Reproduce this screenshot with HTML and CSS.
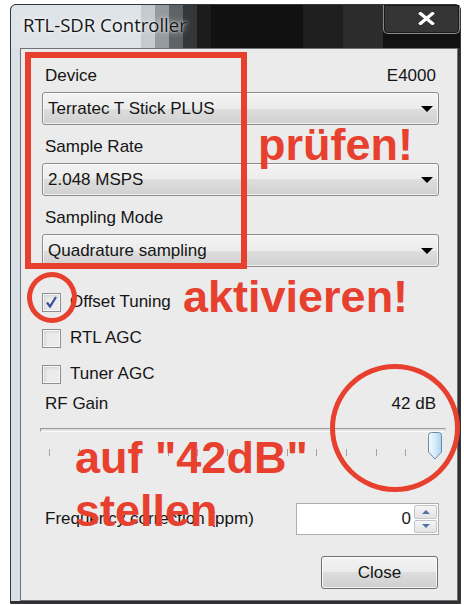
FILE: index.html
```html
<!DOCTYPE html>
<html lang="de">
<head>
<meta charset="utf-8">
<title>RTL-SDR Controller</title>
<link rel="stylesheet" href="styles.css">
</head>
<body>
<div class="window">
  <div class="titlebar">
    <div class="caption-glass">
      <span class="title">RTL-SDR Controller</span>
    </div>
    <div class="glass-step s1"></div>
    <div class="glass-step s2"></div>
    <div class="glass-step s3"></div>
    <div class="glass-step s4"></div>
    <div class="glass-step s5"></div>
    <div class="caption-dark"></div>
    <div class="glass-step s6"></div>
    <div class="glass-step s7"></div>
    <div class="close-x">
      <svg width="17" height="13" viewBox="0 0 17 13"><path d="M2.5 1.5 L14.5 11.5 M14.5 1.5 L2.5 11.5" stroke="#fff" stroke-width="3.2" stroke-linecap="square"/></svg>
    </div>
  </div>

  <div class="client">
    <div class="head"><span>Device</span><span>E4000</span></div>
    <div class="combo"><span>Terratec T Stick PLUS</span><svg class="arrow" width="12" height="6" viewBox="0 0 12 6"><path d="M0 0 H12 L6 6 Z" fill="#000"/></svg></div>

    <div class="head"><span>Sample Rate</span></div>
    <div class="combo"><span>2.048 MSPS</span><svg class="arrow" width="12" height="6" viewBox="0 0 12 6"><path d="M0 0 H12 L6 6 Z" fill="#000"/></svg></div>

    <div class="head"><span>Sampling Mode</span></div>
    <div class="combo combo-last"><span>Quadrature sampling</span><svg class="arrow" width="12" height="6" viewBox="0 0 12 6"><path d="M0 0 H12 L6 6 Z" fill="#000"/></svg></div>

    <div class="checks">
      <div class="check"><span class="box"><svg width="17" height="17" viewBox="0 0 17 17"><path d="M4 8.5 L7 12.5 L13 3" fill="none" stroke="#3b4d9c" stroke-width="2.2"/></svg></span>Offset Tuning</div>
      <div class="check"><span class="box"></span>RTL AGC</div>
      <div class="check"><span class="box"></span>Tuner AGC</div>
    </div>

    <div class="head head-gain"><span>RF Gain</span><span>42 dB</span></div>
    <div class="slider">
      <div class="groove"></div>
      <div class="ticks">
        <i></i><i></i><i></i><i></i><i></i><i></i><i></i><i></i><i></i><i></i><i></i><i></i><i></i><i></i>
      </div>
      <svg class="thumb" width="16" height="28" viewBox="0 0 16 28">
        <defs>
          <linearGradient id="thumbFill" x1="0" y1="0" x2="1" y2="0">
            <stop offset="0" stop-color="#f4fafe"/>
            <stop offset="0.5" stop-color="#d6ecfa"/>
            <stop offset="1" stop-color="#a9d3ef"/>
          </linearGradient>
        </defs>
        <path d="M1.5 3.5 Q1.5 0.5 4.5 0.5 H11.5 Q14.5 0.5 14.5 3.5 V20 L8 27 L1.5 20 Z" fill="url(#thumbFill)" stroke="#6c8aa3"/>
      </svg>
    </div>

    <div class="freq-row">
      <span class="freq-label">Frequency correction (ppm)</span>
      <div class="spin">
        <span class="spin-value">0</span>
        <div class="spin-btns">
          <span class="spin-btn"><svg width="8" height="4" viewBox="0 0 8 4"><path d="M0 4 L4 0 L8 4 Z" fill="#5470ab"/></svg></span>
          <span class="spin-btn"><svg width="8" height="4" viewBox="0 0 8 4"><path d="M0 0 H8 L4 4 Z" fill="#5470ab"/></svg></span>
        </div>
      </div>
    </div>

    <div class="actions"><button class="btn">Close</button></div>

    <!-- red markup drawn over the dialog -->
    <div class="mark mark-box"></div>
    <div class="mark mark-ring-small"></div>
    <div class="mark mark-ring-big"></div>
    <div class="mark mark-text t-check">prüfen!</div>
    <div class="mark mark-text t-enable">aktivieren!</div>
    <div class="mark mark-text t-gain">auf "42dB"<br>stellen</div>
  </div>
</div>
</body>
</html>
```

FILE: styles.css
```css
* {
  box-sizing: border-box;
}

html,
body {
  margin: 0;
  padding: 0;
}

body {
  width: 464px;
  height: 605px;
  overflow: hidden;
  background-color: #ffffff;
  font-family: "Liberation Sans", Arial, sans-serif;
  font-size: 17px;
  color: #151515;
}

/* Aero window frame */
.window {
  margin: 4px 0 0 10px;
  width: 451px;
  height: 600px;
  border: 1px solid #33383d;
  border-radius: 6px 6px 0 0;
  display: flex;
  flex-direction: column;
  background-color: #2e2e2e;
}

/* caption strip: pale glass left, black glass middle, grey right */
.titlebar {
  height: 43px;
  display: flex;
  align-items: stretch;
  flex-shrink: 0;
  background-color: #121212;
  border-radius: 5px 5px 0 0;
}

.caption-glass {
  width: 130px;
  flex-shrink: 0;
  padding: 8px 0 0 12px;
  background-color: #dfe4e8;
  border-radius: 5px 0 0 0;
  white-space: nowrap;
  position: relative;
  z-index: 1;
}

.glass-step {
  width: 14px;
  flex-shrink: 0;
}

.s1 { background-color: #c4cacf; }
.s2 { background-color: #959a9e; }
.s3 { background-color: #5f6366; }
.s4 { background-color: #34373a; }
.s5 { background-color: #1b1b1b; }
.s6 { width: 40px; background-color: #1f1f1f; }
.s7 { width: 40px; background-color: #2c2c2c; }

.caption-dark {
  flex: 1;
  background-color: #111111;
}

.title {
  display: block;
  line-height: 24px;
  font-family: "Open Sans", "Noto Sans", sans-serif;
  font-size: 18.5px;
  color: #141414;
  text-shadow: 0 0 6px rgba(255, 255, 255, 0.9), 0 0 2px rgba(255, 255, 255, 0.8);
}

.close-x {
  width: 77px;
  height: 29px;
  flex-shrink: 0;
  align-self: flex-start;
  border: 1px solid #8a8a8a;
  border-top: none;
  border-radius: 0 0 5px 5px;
  background-color: #353535;
  display: flex;
  align-items: center;
  justify-content: center;
  padding: 0 0 2px 10px;
  box-shadow: inset 0 0 0 1px #1a1a1a;
}

.close-x svg {
  display: block;
}

/* dialog client area */
.client {
  flex: 1;
  position: relative;
  margin: 0 2px 2px 9px;
  border: 1px solid #6c7277;
  background-color: #ebebeb;
  padding: 17px 18px 0 21px;
  box-shadow: -9px 0 0 0 #d9e1e7;
}

.head {
  display: flex;
  justify-content: space-between;
  height: 20px;
  line-height: 20px;
  padding: 0 3px;
  margin-bottom: 6px;
}

.head-gain {
  margin-top: 10px;
  margin-bottom: 4px;
}

.combo {
  height: 33px;
  border: 1px solid #8b8b8b;
  border-radius: 3px;
  background-color: #e4e4e4;
  background-image: linear-gradient(to bottom, #f3f3f3 0%, #ececec 50%, #dedede 50%, #d0d0d0 100%);
  box-shadow: inset 0 0 0 1px rgba(255, 255, 255, 0.7);
  display: flex;
  align-items: center;
  justify-content: space-between;
  padding: 0 5px;
  margin-bottom: 12px;
}

.combo-last {
  margin-bottom: 25px;
}

.arrow {
  display: block;
  margin-top: 1px;
}

.checks {
  display: flex;
  flex-direction: column;
  gap: 16px;
}

.check {
  display: flex;
  align-items: center;
  gap: 9px;
  height: 20px;
}

.box {
  width: 19px;
  height: 19px;
  border: 1px solid #8e8f90;
  background-color: #ebebeb;
  box-shadow: inset 0 0 0 1px #f7f7f7, inset 2px 2px 3px #cfd0d1;
  display: flex;
  align-items: center;
  justify-content: center;
}

.box svg {
  display: block;
}

/* gain track bar */
.slider {
  position: relative;
  height: 42px;
}

.groove {
  margin: 14px -7px 0 -2px;
  height: 4px;
  border: 1px solid;
  border-color: #9a9a9a #d6d6d6 #fbfbfb #9a9a9a;
  background-color: #e2e2e2;
}

.ticks {
  display: flex;
  justify-content: space-between;
  margin: 17px 3px 0 7px;
  height: 7px;
}

.ticks i {
  display: block;
  width: 1px;
  height: 7px;
  background-color: #a3a3a3;
}

.thumb {
  position: absolute;
  left: 385px;
  top: 4px;
  display: block;
}

.freq-row {
  margin-top: 33px;
  height: 32px;
  display: flex;
  justify-content: space-between;
  align-items: center;
}

.freq-label {
  padding-left: 3px;
}

.spin {
  width: 143px;
  height: 32px;
  border: 1px solid #abadb3;
  background-color: #fff;
  display: flex;
  padding: 1px 1px 1px 0;
}

.spin-value {
  flex: 1;
  text-align: right;
  padding-right: 3px;
  line-height: 28px;
  color: #1a1a1a;
}

.spin-btns {
  width: 23px;
  display: flex;
  flex-direction: column;
  gap: 1px;
}

.spin-btn {
  flex: 1;
  border: 1px solid #c3c5c9;
  border-radius: 2px;
  background-color: #ececec;
  background-image: linear-gradient(to bottom, #f6f6f6 0%, #e2e2e2 100%);
  display: flex;
  align-items: center;
  justify-content: center;
}

.spin-btn svg {
  display: block;
}

.actions {
  margin-top: 21px;
  display: flex;
  justify-content: flex-end;
  padding-right: 1px;
}

.btn {
  width: 117px;
  height: 33px;
  border: 1px solid #707070;
  border-radius: 3px;
  background-color: #e4e4e4;
  background-image: linear-gradient(to bottom, #f3f3f3 0%, #ebebeb 50%, #dddddd 50%, #cfcfcf 100%);
  box-shadow: inset 0 0 0 1px rgba(255, 255, 255, 0.75);
  font-family: "Liberation Sans", Arial, sans-serif;
  font-size: 17px;
  color: #151515;
  padding: 0;
}

/* red hand markup over the dialog */
.mark {
  position: absolute;
  pointer-events: none;
}

.mark-box {
  left: 4px;
  top: 3px;
  width: 222px;
  height: 217px;
  border: 6px solid #e8402e;
}

.mark-ring-small {
  left: 6px;
  top: 223px;
  width: 50px;
  height: 51px;
  border: 5px solid #e8402e;
  border-radius: 50%;
}

.mark-ring-big {
  left: 309px;
  top: 315px;
  width: 130px;
  height: 128px;
  border: 5px solid #e8402e;
  border-radius: 50%;
}

.mark-text {
  font-family: "Liberation Sans", Arial, sans-serif;
  font-weight: bold;
  font-size: 45px;
  line-height: 45px;
  color: #e8402e;
  white-space: nowrap;
}

.t-check {
  left: 237px;
  top: 73px;
}

.t-enable {
  left: 162px;
  top: 225px;
}

.t-gain {
  left: 54px;
  top: 382px;
  line-height: 53px;
}
```
